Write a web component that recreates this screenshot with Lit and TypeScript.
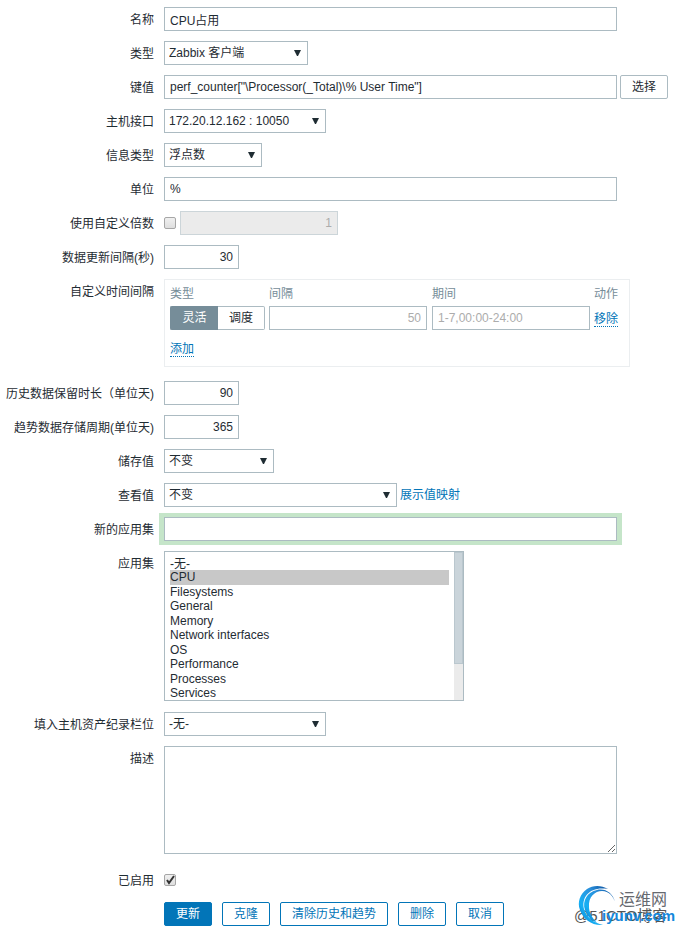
import { LitElement, html, css, svg, type TemplateResult } from "lit";
import { customElement, state } from "lit/decorators.js";
import { classMap } from "lit/directives/class-map.js";

const APPLICATIONS = [
  "-无-",
  "CPU",
  "Filesystems",
  "General",
  "Memory",
  "Network interfaces",
  "OS",
  "Performance",
  "Processes",
  "Services",
];

@customElement("site-watermark")
export class SiteWatermark extends LitElement {
  static styles = css`
    :host {
      display: block;
    }
    svg {
      display: block;
    }
    .stamp,
    .site {
      font-family: "Liberation Sans", "Noto Sans CJK SC", sans-serif;
      font-size: 15px;
    }
    .stamp {
      fill: #555;
    }
    .brand {
      font: 16px "Noto Sans CJK SC", sans-serif;
      fill: #66696f;
    }
    .site {
      font-weight: bold;
      fill: #1488dc;
    }
  `;

  render() {
    return html`
      <svg width="108" height="46" viewBox="0 0 108 46" role="img" aria-label="运维网 iyunv.com">
        ${svg`
          <defs>
            <linearGradient id="swoosh" x1="1" y1="0" x2="0" y2="1">
              <stop offset="0" stop-color="#0a4f9c" />
              <stop offset="0.35" stop-color="#2a90dc" />
              <stop offset="0.7" stop-color="#16b0f4" />
              <stop offset="1" stop-color="#0b6fc4" />
            </linearGradient>
          </defs>
          <text class="stamp" x="2" y="39">@51CTO博客</text>
          <path
            fill="url(#swoosh)"
            d="M36 7C29 3 21 3 15 7C8 12 5 20 8 28C11 37 20 44 31 43C22 41 14 35 12 27C9 15 18 4 36 7Z"
          />
          <path
            fill="url(#swoosh)"
            d="M43 20C41 11 33 6 25 8C15 10 10 19 13 28C15 34 19 38 25 41C20 36 17 30 17 25C16 15 23 9 30 9C37 9 41 14 43 20Z"
          />
          <text class="brand" x="47" y="23">运维网</text>
          <text class="site" x="30" y="39">iyunv.com</text>
        `}
      </svg>
    `;
  }
}

@customElement("app-root")
export class AppRoot extends LitElement {
  @state() private flexible = true;
  @state() private multiplier = false;

  static styles = css`
    :host {
      display: block;
      background: #fff;
      color: #1f2c33;
      font: 12px/24px "Liberation Sans", "Noto Sans CJK SC", sans-serif;
    }
    * {
      box-sizing: border-box;
    }
    .page {
      position: relative;
      padding: 7px 14px 7px 0;
    }
    .form {
      display: flex;
      flex-direction: column;
      gap: 10px;
    }
    .row {
      display: grid;
      grid-template-columns: 154px minmax(0, 1fr);
      column-gap: 10px;
      align-items: start;
    }
    .row.tall {
      margin-bottom: 4px;
    }
    .row.list {
      margin-bottom: 1px;
    }
    .label {
      height: 24px;
      line-height: 26px;
      text-align: right;
      white-space: nowrap;
    }
    .field {
      display: flex;
      align-items: center;
      gap: 3px;
      min-height: 24px;
    }
    .field.loose {
      gap: 4px;
    }
    input,
    select,
    textarea,
    button {
      margin: 0;
      border: 1px solid #acbbc2;
      border-radius: 0;
      background-color: #fff;
      color: inherit;
      font: inherit;
      outline: none;
    }
    .text,
    .drop {
      height: 24px;
      line-height: 22px;
    }
    .text {
      min-width: 0;
      padding: 0 5px;
    }
    .text::placeholder {
      color: #acacac;
      opacity: 1;
    }
    .wide {
      flex: 1;
      max-width: 453px;
    }
    .short {
      width: 75px;
    }
    .medium {
      width: 158px;
    }
    .number {
      text-align: right;
    }
    .text:disabled {
      background: #ebebeb;
      border-color: #ccd5d9;
      color: #acacac;
    }
    .focused {
      box-shadow: -1px 0 0 4px #c5e5c9, 1px 0 0 4px #c5e5c9;
    }
    .drop {
      appearance: none;
      padding: 0 20px 0 4px;
      background-image: url("data:image/svg+xml,%3Csvg xmlns='http://www.w3.org/2000/svg' width='7' height='6'%3E%3Cpath d='M0 0h7L4 6H3z' fill='%231f2c33'/%3E%3C/svg%3E");
      background-repeat: no-repeat;
      background-position: right 6px top 8px;
    }
    .w98 {
      width: 98px;
    }
    .w110 {
      width: 110px;
    }
    .w144 {
      width: 144px;
    }
    .w162 {
      width: 162px;
    }
    .w233 {
      width: 233px;
    }
    .check {
      appearance: none;
      width: 12px;
      height: 12px;
      border-color: #a6a6a6;
      border-radius: 2px;
      background: linear-gradient(#f0f0f0, #dedede);
    }
    .check:checked {
      background:
        url("data:image/svg+xml,%3Csvg xmlns='http://www.w3.org/2000/svg' width='10' height='10'%3E%3Cpath d='M2 5l2 3 5-7' fill='none' stroke='%23333' stroke-width='2'/%3E%3C/svg%3E")
          center no-repeat,
        linear-gradient(#f0f0f0, #dedede);
    }
    .btn {
      height: 24px;
      padding: 0 11px;
      border-radius: 2px;
      line-height: 22px;
      white-space: nowrap;
      cursor: pointer;
    }
    .action {
      border-color: #0275b8;
      color: #0275b8;
    }
    .primary {
      background: #0275b8;
      color: #fff;
    }
    .actions {
      display: flex;
      flex-wrap: wrap;
      gap: 10px;
      grid-column: 2;
    }
    .link {
      color: #0275b8;
      text-decoration: none;
    }
    .dotted {
      border-bottom: 1px dotted #0275b8;
    }
    .box {
      max-width: 466px;
      flex: 1;
      padding: 4px 5px;
      border: 1px solid #ebeef0;
    }
    .table {
      border-collapse: collapse;
    }
    .table th,
    .table td {
      padding: 0 4px 0 0;
      text-align: left;
      white-space: nowrap;
      font-weight: normal;
    }
    .table th {
      height: 22px;
      line-height: 20px;
      vertical-align: top;
      color: #768d99;
    }
    .table td {
      height: 24px;
      line-height: 26px;
      vertical-align: top;
    }
    .table .spaced {
      padding-right: 5px;
    }
    .table .foot {
      padding-top: 4px;
      height: 30px;
    }
    .table .text {
      display: block;
    }
    .segments {
      display: flex;
    }
    .segment {
      height: 24px;
      padding: 0 11px;
      line-height: 22px;
      cursor: pointer;
    }
    .segment:first-child {
      width: 48px;
      border-right: 0;
      border-radius: 2px 0 0 2px;
    }
    .segment:last-child {
      border-left: 0;
      border-radius: 0 2px 2px 0;
    }
    .segment.on {
      border-color: #768d99;
      background: #768d99;
      color: #fff;
    }
    .scroller {
      position: relative;
      width: 300px;
      height: 150px;
    }
    .listbox {
      display: block;
      width: 100%;
      height: 100%;
      padding: 2px 14px 0 5px;
      overflow: hidden;
    }
    .listbox option {
      min-height: 0;
      height: 15px;
      padding: 0;
      line-height: 14px;
    }
    .listbox option:nth-child(odd) {
      height: 14px;
    }
    .listbox option:first-child {
      height: 16px;
    }
    .listbox option:checked {
      background: #c8c8c8 linear-gradient(#c8c8c8, #c8c8c8);
      color: #1f2c33;
    }
    .track {
      position: absolute;
      top: 1px;
      right: 1px;
      bottom: 1px;
      width: 9px;
      background: #ebebeb;
      pointer-events: none;
    }
    .thumb {
      height: 112px;
      border: 1px solid #bac7ce;
      background: #cad4da;
    }
    .notes {
      height: 108px;
      padding: 5px;
      resize: vertical;
    }
    .watermark {
      position: absolute;
      right: 2px;
      bottom: 5px;
      pointer-events: none;
    }
  `;

  private row(id: string, label: string, field: TemplateResult, kind = "") {
    return html`
      <div class=${classMap({ row: true, tall: kind === "tall", list: kind === "list" })}>
        ${id
          ? html`<label class="label" for=${id}>${label}</label>`
          : html`<span class="label">${label}</span>`}
        <div class=${classMap({ field: true, loose: kind === "loose" })}>${field}</div>
      </div>
    `;
  }

  private drop(id: string, width: string, value: string) {
    return html`<select id=${id} class="drop ${width}">
      <option>${value}</option>
    </select>`;
  }

  private intervals() {
    const segment = (label: string, on: boolean) => html`<button
      type="button"
      class=${classMap({ segment: true, on })}
      aria-pressed=${on ? "true" : "false"}
      @click=${() => (this.flexible = label === "灵活")}
    >${label}</button>`;
    return html`
      <div class="box">
        <table class="table">
          <thead>
            <tr>
              <th>类型</th>
              <th>间隔</th>
              <th>期间</th>
              <th>动作</th>
            </tr>
          </thead>
          <tbody>
            <tr>
              <td>
                <div class="segments">
                  ${segment("灵活", this.flexible)}${segment("调度", !this.flexible)}
                </div>
              </td>
              <td class="spaced">
                <input class="text medium number" aria-label="间隔" placeholder="50" />
              </td>
              <td>
                <input class="text medium" aria-label="期间" placeholder="1-7,00:00-24:00" />
              </td>
              <td><a class="link dotted" href="#remove">移除</a></td>
            </tr>
            <tr>
              <td class="foot" colspan="4"><a class="link dotted" href="#add">添加</a></td>
            </tr>
          </tbody>
        </table>
      </div>
    `;
  }

  render() {
    return html`
      <main class="page">
        <form class="form" @submit=${(e: Event) => e.preventDefault()}>
          ${this.row("name", "名称", html`<input id="name" class="text wide" value="CPU占用" />`)}
          ${this.row("type", "类型", this.drop("type", "w144", "Zabbix 客户端"))}
          ${this.row(
            "key",
            "键值",
            html`<input
                id="key"
                class="text wide"
                value=${'perf_counter["\\Processor(_Total)\\% User Time"]'}
              />
              <button type="button" class="btn">选择</button>`,
          )}
          ${this.row("iface", "主机接口", this.drop("iface", "w162", "172.20.12.162 : 10050"))}
          ${this.row("value-type", "信息类型", this.drop("value-type", "w98", "浮点数"))}
          ${this.row("units", "单位", html`<input id="units" class="text wide" value="%" />`)}
          ${this.row(
            "multiplier",
            "使用自定义倍数",
            html`<input
                id="multiplier"
                type="checkbox"
                class="check"
                @change=${(e: Event) => (this.multiplier = (e.target as HTMLInputElement).checked)}
              />
              <input
                class="text medium number"
                aria-label="倍数"
                value="1"
                ?disabled=${!this.multiplier}
              />`,
            "loose",
          )}
          ${this.row("delay", "数据更新间隔(秒)", html`<input id="delay" class="text short number" value="30" />`)}
          ${this.row("", "自定义时间间隔", this.intervals(), "tall")}
          ${this.row("history", "历史数据保留时长（单位天)", html`<input id="history" class="text short number" value="90" />`)}
          ${this.row("trends", "趋势数据存储周期(单位天)", html`<input id="trends" class="text short number" value="365" />`)}
          ${this.row("store", "储存值", this.drop("store", "w110", "不变"))}
          ${this.row(
            "show",
            "查看值",
            html`${this.drop("show", "w233", "不变")}<a class="link" href="#valuemaps">展示值映射</a>`,
          )}
          ${this.row("new-app", "新的应用集", html`<input id="new-app" class="text wide focused" />`)}
          ${this.row(
            "apps",
            "应用集",
            html`<div class="scroller">
              <select id="apps" class="listbox" multiple size="10">
                ${APPLICATIONS.map((name) => html`<option ?selected=${name === "CPU"}>${name}</option>`)}
              </select>
              <div class="track"><div class="thumb"></div></div>
            </div>`,
            "list",
          )}
          ${this.row("inventory", "填入主机资产纪录栏位", this.drop("inventory", "w162", "-无-"))}
          ${this.row("notes", "描述", html`<textarea id="notes" class="notes wide"></textarea>`, "tall")}
          ${this.row("enabled", "已启用", html`<input id="enabled" type="checkbox" class="check" checked />`)}
          <div class="row">
            <div class="actions">
              <button class="btn action primary">更新</button>
              ${["克隆", "清除历史和趋势", "删除", "取消"].map(
                (name) => html`<button type="button" class="btn action">${name}</button>`,
              )}
            </div>
          </div>
        </form>
        <site-watermark class="watermark"></site-watermark>
      </main>
    `;
  }
}
